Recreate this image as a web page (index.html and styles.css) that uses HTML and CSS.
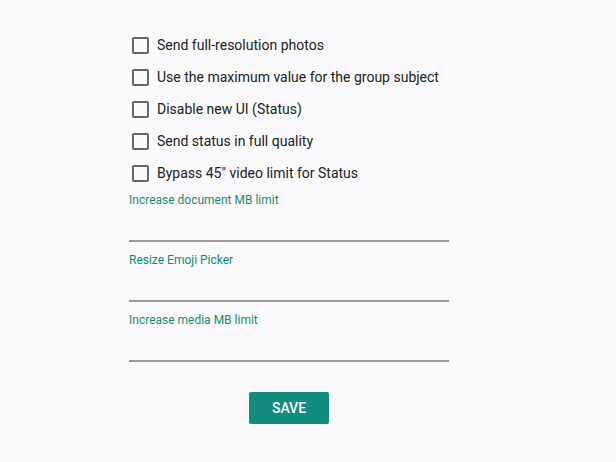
FILE: index.html
```html
<!DOCTYPE html>
<html lang="en">
<head>
  <meta charset="utf-8">
  <title>Settings</title>
  <link rel="stylesheet" href="styles.css">
</head>
<body>
  <form class="settings">
    <div class="checks">
      <label class="check"><input type="checkbox"><span>Send full-resolution photos</span></label>
      <label class="check"><input type="checkbox"><span>Use the maximum value for the group subject</span></label>
      <label class="check"><input type="checkbox"><span>Disable new UI (Status)</span></label>
      <label class="check"><input type="checkbox"><span>Send status in full quality</span></label>
      <label class="check"><input type="checkbox"><span>Bypass 45" video limit for Status</span></label>
    </div>

    <div class="field">
      <label for="doc-limit">Increase document MB limit</label>
      <input id="doc-limit" type="text">
    </div>
    <div class="field">
      <label for="emoji-size">Resize Emoji Picker</label>
      <input id="emoji-size" type="text">
    </div>
    <div class="field">
      <label for="media-limit">Increase media MB limit</label>
      <input id="media-limit" type="text">
    </div>

    <div class="actions">
      <button type="button" class="save">SAVE</button>
    </div>
  </form>
</body>
</html>
```

FILE: styles.css
```css
*, *::before, *::after {
  margin: 0;
  padding: 0;
  box-sizing: border-box;
}

body {
  min-height: 100vh;
  padding: 29px 0 0 129px;
  font-family: Roboto, "Noto Sans", sans-serif;
  color: #212121;
  background-color: #fafafc;
}

.settings {
  width: 320px;
  display: flex;
  flex-direction: column;
}

.checks {
  margin-bottom: 3px;
}

.check {
  height: 32px;
  display: flex;
  align-items: center;
  gap: 8px;
  padding-left: 3px;
  font-size: 14px;
  white-space: nowrap;
  cursor: pointer;
}

.check input {
  appearance: none;
  width: 17px;
  height: 17px;
  border: 2px solid #666;
  border-radius: 2px;
  background: transparent;
}

.field {
  display: flex;
  flex-direction: column;
  margin-bottom: 10px;
}

.field label {
  line-height: 16px;
  font-size: 12px;
  color: #148a72;
}

.field input {
  height: 34px;
  border: 0;
  border-bottom: 2px solid #9a9a9a;
  background: transparent;
  font: inherit;
  outline: none;
}

.actions {
  display: flex;
  justify-content: center;
  margin-top: 20px;
}

.save {
  width: 80px;
  height: 32px;
  border: 0;
  border-radius: 2px;
  background-color: #128c7e;
  color: #fff;
  font-family: Roboto, sans-serif;
  font-size: 14px;
  font-weight: 500;
}
```
